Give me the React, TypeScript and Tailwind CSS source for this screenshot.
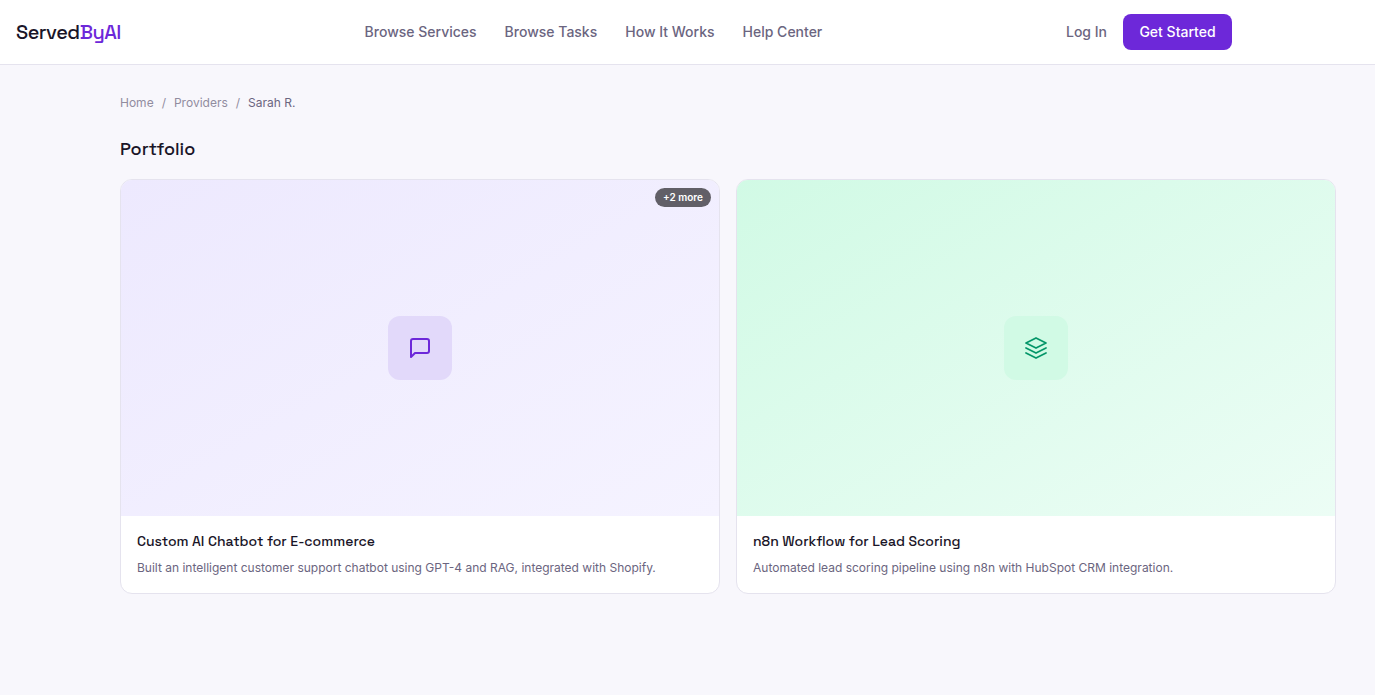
import type { ReactNode } from "react";
import clsx from "clsx";

const NAV_LINKS = ["Browse Services", "Browse Tasks", "How It Works", "Help Center"];

type PortfolioItem = {
  title: string;
  description: string;
  coverCls: string;
  iconCls: string;
  icon: ReactNode;
  strokeWidth: number;
  extra?: number;
};

const ITEMS: PortfolioItem[] = [
  {
    title: "Custom AI Chatbot for E-commerce",
    description: "Built an intelligent customer support chatbot using GPT-4 and RAG, integrated with Shopify.",
    coverCls: "bg-[linear-gradient(150deg,#ede9fe,#f5f3ff)]",
    iconCls: "bg-[#e2d9fa] text-[#6d28d9]",
    icon: <path d="M21 15a2 2 0 0 1-2 2H7l-4 4V5a2 2 0 0 1 2-2h14a2 2 0 0 1 2 2z" />,
    strokeWidth: 2,
    extra: 2,
  },
  {
    title: "n8n Workflow for Lead Scoring",
    description: "Automated lead scoring pipeline using n8n with HubSpot CRM integration.",
    coverCls: "bg-[linear-gradient(150deg,#d1fae5,#ecfdf5)]",
    iconCls: "bg-[#d1fae5] text-[#059669]",
    icon: (
      <>
        <polygon points="12 2 2 7 12 12 22 7 12 2" />
        <polyline points="2 17 12 22 22 17" />
        <polyline points="2 12 12 17 22 12" />
      </>
    ),
    strokeWidth: 1.75,
  },
];

function Header() {
  return (
    <header className="border-b border-[#e5e3ee] bg-white">
      <div className="flex h-16 max-w-[1248px] items-center justify-between px-4">
        <a href="#" className="font-['Space_Grotesk','Inter',sans-serif] text-xl font-medium tracking-[-0.5px] text-[#1a1528]">
          Served<span className="text-[#6d28d9]">ByAI</span>
        </a>
        <nav className="flex items-center gap-7">
          {NAV_LINKS.map((label) => (
            <a key={label} href="#" className="text-sm font-medium text-[#6b6580]">
              {label}
            </a>
          ))}
        </nav>
        <div className="flex items-center gap-4">
          <a href="#" className="text-sm font-medium text-[#6b6580]">Log In</a>
          <a
            href="#"
            className="flex h-9 w-[109px] items-center justify-center rounded-lg bg-[#6d28d9] text-sm font-medium text-white"
          >
            Get Started
          </a>
        </div>
      </div>
    </header>
  );
}

function PortfolioCard({ item }: { item: PortfolioItem }) {
  return (
    <article className="overflow-hidden rounded-xl border border-[#e5e3ee] bg-white">
      <div className={clsx("relative flex h-[336px] items-center justify-center", item.coverCls)}>
        <div className={clsx("flex size-16 items-center justify-center rounded-xl", item.iconCls)}>
          <svg
            width="24"
            height="24"
            viewBox="0 0 24 24"
            fill="none"
            stroke="currentColor"
            strokeWidth={item.strokeWidth}
            strokeLinecap="round"
            strokeLinejoin="round"
          >
            {item.icon}
          </svg>
        </div>
        {item.extra && (
          <span className="absolute top-2 right-2 flex h-[19px] items-center rounded-full bg-[#615f67] px-2 text-[10px] font-semibold text-white">
            +{item.extra} more
          </span>
        )}
      </div>
      <div className="px-4 pt-4 pb-[15px]">
        <h3 className="mb-[7px] font-['Space_Grotesk','Inter',sans-serif] text-sm leading-[19px] font-medium text-[#1a1528]">
          {item.title}
        </h3>
        <p className="text-xs leading-5 text-[#6b6580]">{item.description}</p>
      </div>
    </article>
  );
}

export default function App() {
  return (
    <div className="min-h-screen bg-[#f8f7fc] font-['Inter',sans-serif]">
      <Header />
      <main className="ml-[120px] w-[1216px] pt-7">
        <div className="flex h-5 items-center gap-2 text-xs text-[#918c9f]">
          <a href="#">Home</a>
          <span>/</span>
          <a href="#">Providers</a>
          <span>/</span>
          <span className="text-[#6b6580]">Sarah R.</span>
        </div>
        <h2 className="mt-6 mb-[18px] font-['Space_Grotesk','Inter',sans-serif] text-lg leading-6 font-medium text-[#1a1528]">
          Portfolio
        </h2>
        <div className="grid grid-cols-2 gap-4">
          {ITEMS.map((item) => (
            <PortfolioCard key={item.title} item={item} />
          ))}
        </div>
      </main>
    </div>
  );
}
